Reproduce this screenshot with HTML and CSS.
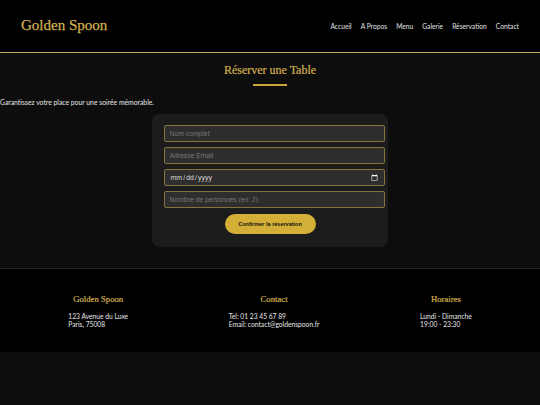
FILE: index.html
```html
<!DOCTYPE html>
<html lang="fr">
<head>
<meta charset="utf-8">
<title>Golden Spoon</title>
<link rel="stylesheet" href="styles.css">
</head>
<body>
<header class="site-header">
  <div class="logo">Golden Spoon</div>
  <nav class="nav">
    <a href="#">Accueil</a>
    <a href="#">A Propos</a>
    <a href="#">Menu</a>
    <a href="#">Galerie</a>
    <a href="#">Réservation</a>
    <a href="#">Contact</a>
  </nav>
</header>
<main class="main">
  <h2 class="title">Réserver une Table</h2>
  <div class="title-bar"></div>
  <p class="intro">Garantissez votre place pour une soirée mémorable.</p>
  <form class="card">
    <input class="field" type="text" placeholder="Nom complet">
    <input class="field" type="email" placeholder="Adresse Email">
    <input class="field" type="date">
    <input class="field" type="number" placeholder="Nombre de personnes (ex: 2)">
    <button class="btn" type="button">Confirmer la réservation</button>
  </form>
</main>
<footer class="footer">
  <div class="col">
    <h3>Golden Spoon</h3>
    <p>123 Avenue du Luxe<br>Paris, 75008</p>
  </div>
  <div class="col">
    <h3>Contact</h3>
    <p>Tel: 01 23 45 67 89<br>Email: contact@goldenspoon.fr</p>
  </div>
  <div class="col">
    <h3>Horaires</h3>
    <p>Lundi - Dimanche<br>19:00 - 23:30</p>
  </div>
</footer>
</body>
</html>
```
FILE: styles.css
```css
html, body {
  margin: 0;
  padding: 0;
  background: #0d0d0d;
  color: #e6e6e6;
  font-family: Lato, "Liberation Sans", sans-serif;
}
.site-header {
  background: #000;
  height: 52px;
  border-bottom: 1px solid #c9a96a;
  display: flex;
  align-items: center;
  justify-content: space-between;
  padding: 0 21px;
  box-sizing: content-box;
}
.logo {
  font-family: "Liberation Serif", serif;
  font-size: 15px;
  color: #d4b050;
  margin-top: -1px;
  -webkit-text-stroke: 0.25px #d4b050;
}
.nav {
  display: flex;
  gap: 9px;
}
.nav a {
  color: #e0e0e0;
  text-decoration: none;
  font-size: 6.7px;
}
.main {
  padding-top: 9px;
  padding-bottom: 21.5px;
}
.title {
  margin: 0;
  text-align: center;
  font-family: "Liberation Serif", serif;
  font-weight: normal;
  font-size: 12px;
  color: #d4b050;
  line-height: 16px;
  -webkit-text-stroke: 0.2px #d4b050;
}
.title-bar {
  width: 34px;
  height: 2px;
  background: #c9a43a;
  margin: 6px auto 0;
}
.intro {
  margin: 12px 0 0;
  font-size: 6.8px;
  line-height: 8px;
  color: #e6e6e6;
}
.card {
  width: 212px;
  margin: 8px auto 0;
  padding: 11px 12px 12.5px;
  background: #1c1c1c;
  border-radius: 8px;
  display: flex;
  flex-direction: column;
  align-items: flex-start;
}
.field {
  box-sizing: border-box;
  width: 221px;
  height: 16.5px;
  margin: 0 0 5.5px;
  padding: 0 4.5px;
  background: #2e2e2e;
  border: 1px solid #85743f;
  border-radius: 2px;
  color: #ddd;
  font-family: "Liberation Sans", Arial, sans-serif;
  font-size: 6.8px;
  color-scheme: dark;
}
.field::placeholder {
  color: #777;
}
.field[type="date"] {
  font-size: 7px;
  color: #ddd;
}
.btn {
  align-self: center;
  margin-top: 1px;
  width: 91px;
  height: 20px;
  border: none;
  border-radius: 10px;
  background: #d4af37;
  color: #111;
  font-family: "Liberation Sans", Arial, sans-serif;
  font-weight: bold;
  font-size: 5.5px;
  cursor: pointer;
}
.footer {
  background: #000;
  border-top: 1px solid #222;
  display: flex;
  justify-content: space-around;
  padding: 24px 18px 24px;
}
.col h3 {
  margin: 0 0 7px;
  text-align: center;
  font-family: "Liberation Serif", serif;
  font-weight: normal;
  font-size: 8.7px;
  line-height: 12px;
  color: #d4b050;
  -webkit-text-stroke: 0.2px #d4b050;
}
.col p {
  margin: 0;
  font-size: 6.7px;
  line-height: 8px;
  color: #e6e6e6;
}
```
